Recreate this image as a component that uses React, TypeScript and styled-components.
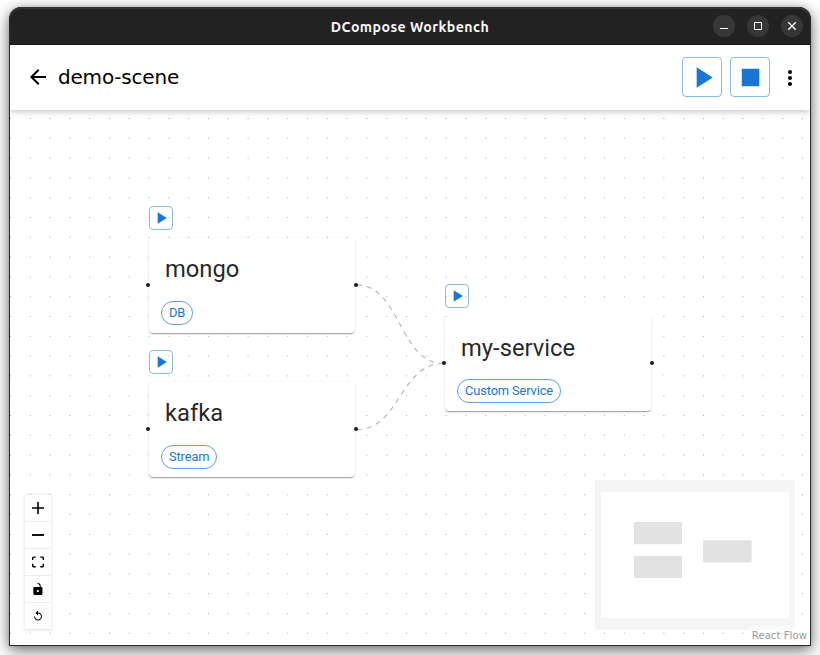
import React from "react";
import styled, { createGlobalStyle } from "styled-components";

const GlobalStyle = createGlobalStyle`
  html, body { margin: 0; height: 100%; overflow: hidden; background: #fff; }
  *, *::before, *::after { box-sizing: border-box; }
  button { font: inherit; color: inherit; padding: 0; margin: 0; }
  svg { display: block; flex: none; }
`;

const blue = "#1976d2";

const Desktop = styled.div`
  width: 820px;
  height: 655px;
  padding: 7px 9px 9px 9px;
  overflow: hidden;
  font-family: Roboto, sans-serif;
`;

const Window = styled.main`
  width: 802px;
  height: 639px;
  display: flex;
  flex-direction: column;
  border: 1px solid #2b2b2b;
  border-top: 0;
  border-radius: 12px 12px 0 0;
  background: #222;
  box-shadow: 0 4px 15px rgba(0, 0, 0, 0.6), 0 0 3px rgba(0, 0, 0, 0.15);
`;

const TitleBar = styled.header`
  height: 38px;
  flex: none;
  display: grid;
  grid-template-columns: 1fr auto 1fr;
  align-items: center;
  border-radius: 12px 12px 0 0;
  border-bottom: 1px solid #161616;
  background: #222;
  box-shadow: inset 0 2px 0 #343434;
`;

const WindowTitle = styled.h1`
  grid-column: 2;
  margin: 2px 0 0;
  font: 700 14.2px/20px Ubuntu, "Noto Sans", sans-serif;
  letter-spacing: 0.42px;
  color: #f7f7f7;
`;

const WindowButtons = styled.div`
  display: flex;
  justify-content: flex-end;
  gap: 12px;
  padding-right: 7px;
`;

const WindowButton = styled.button`
  width: 22px;
  height: 22px;
  display: grid;
  place-items: center;
  border: 0;
  border-radius: 50%;
  background: #373737;
`;

const AppBar = styled.div`
  z-index: 1;
  height: 65px;
  flex: none;
  display: flex;
  align-items: center;
  padding: 0 8px 1px 16px;
  background: #fff;
  box-shadow: 0 2px 4px -1px rgba(0, 0, 0, 0.12), 0 4px 5px rgba(0, 0, 0, 0.06),
    0 1px 10px rgba(0, 0, 0, 0.08);
  clip-path: inset(0 0 -20px 0);
`;

const IconButton = styled.button`
  width: 24px;
  height: 24px;
  border: 0;
  background: none;
`;

const MoreButton = styled(IconButton)`
  margin-top: 2px;
`;

const SceneName = styled.h2`
  flex: 1;
  margin: 0 0 1px 8px;
  font: 400 20px/28px "DejaVu Sans", sans-serif;
  letter-spacing: -0.2px;
  color: #000;
`;

const Actions = styled.div`
  display: flex;
  align-items: center;
  gap: 8px;
`;

const ActionButton = styled.button<{ $small?: boolean }>`
  width: ${(p) => (p.$small ? 24 : 40)}px;
  height: ${(p) => (p.$small ? 24 : 40)}px;
  display: grid;
  place-items: center;
  border: 1px solid rgba(25, 118, 210, 0.5);
  border-radius: 4px;
  background: none;
`;

const Canvas = styled.section`
  position: relative;
  flex: 1;
  overflow: hidden;
  background: #fff;
`;

const Backdrop = styled.svg`
  position: absolute;
  inset: 0;
`;

const Node = styled.div<{ $x: number; $y: number }>`
  position: absolute;
  left: ${(p) => p.$x}px;
  top: ${(p) => p.$y}px;
  width: 206px;
`;

const Card = styled.article`
  position: relative;
  height: 95px;
  margin-top: 8px;
  padding: 15.4px 12px 8px;
  display: flex;
  flex-direction: column;
  justify-content: space-between;
  align-items: flex-start;
  border-radius: 4px;
  background: #fff;
  box-shadow: 0 2px 1px -1px rgba(0, 0, 0, 0.2), 0 1px 1px rgba(0, 0, 0, 0.14),
    0 1px 3px rgba(0, 0, 0, 0.12);
`;

const NodeName = styled.h3`
  margin: 0 4px;
  font: 400 23.75px/32px Roboto, sans-serif;
  color: rgba(0, 0, 0, 0.87);
`;

const Chip = styled.span`
  height: 24px;
  padding: 0 7px;
  border: 1px solid rgba(25, 118, 210, 0.7);
  border-radius: 12px;
  font: 400 12.87px/22px Roboto, sans-serif;
  letter-spacing: -0.13px;
  color: ${blue};
`;

const Handle = styled.i<{ $side: "left" | "right" }>`
  position: absolute;
  top: 45px;
  ${(p) => p.$side}: -3px;
  width: 4px;
  height: 4px;
  border-radius: 50%;
  background: #1a192b;
`;

const Controls = styled.div`
  position: absolute;
  left: 15px;
  bottom: 15px;
  width: 26px;
  display: flex;
  flex-direction: column;
  box-shadow: 0 0 2px 1px rgba(0, 0, 0, 0.08);
`;

const ControlButton = styled.button`
  width: 26px;
  height: 27px;
  display: grid;
  place-items: center;
  border: 0;
  border-bottom: 1px solid #eee;
  background: #fefefe;
`;

const MiniMap = styled.svg`
  position: absolute;
  right: 15px;
  bottom: 15px;
  background: #fff;
`;

const Attribution = styled.span`
  position: absolute;
  right: 0;
  bottom: 0;
  padding: 3px 3px 2px;
  background: rgba(255, 255, 255, 0.5);
  font: 400 10px/14px "DejaVu Sans", sans-serif;
  letter-spacing: 0.1px;
  color: #999;
`;

const MaterialIcon = ({ d, size = 24, color = "#000" }: { d: string; size?: number; color?: string }) => (
  <svg width={size} height={size} viewBox="0 0 24 24" fill={color}>
    <path d={d} />
  </svg>
);

const PLAY = "M8 5v14l11-7z";
const STOP = "M6 6h12v12H6z";
const BACK = "M20 11H7.83l5.59-5.59L12 4l-8 8 8 8 1.41-1.41L7.83 13H20v-2z";
const MORE =
  "M12 8c1.1 0 2-.9 2-2s-.9-2-2-2-2 .9-2 2 .9 2 2 2zm0 2c-1.1 0-2 .9-2 2s.9 2 2 2 2-.9 2-2-.9-2-2-2zm0 6c-1.1 0-2 .9-2 2s.9 2 2 2 2-.9 2-2-.9-2-2-2z";

const nodes = [
  { name: "mongo", kind: "DB", x: 139, y: 95.6 },
  { name: "kafka", kind: "Stream", x: 139, y: 240 },
  { name: "my-service", kind: "Custom Service", x: 435, y: 174.4 },
];

const edges = [
  "M347 175C390 175 390 253.5 433 253.5",
  "M347 319.5C390 319.5 390 253.5 433 253.5",
];

const controlIcons = [
  <svg key="in" width="12" height="12" viewBox="0 0 32 32"><path d="M32 18.133H18.133V32h-4.266V18.133H0v-4.266h13.867V0h4.266v13.867H32z" /></svg>,
  <svg key="out" width="12" height="12" viewBox="0 0 32 32"><path d="M0 13.5h32v5H0z" /></svg>,
  <svg key="fit" width="12" height="12" viewBox="0 0 32 30"><path d="M3.692 4.63c0-.53.4-.938.939-.938h5.215V0H4.708C2.13 0 0 2.054 0 4.63v5.216h3.692V4.631zM27.354 0h-5.2v3.692h5.17c.53 0 .984.4.984.939v5.215H32V4.631A4.624 4.624 0 0027.354 0zm.954 24.83c0 .532-.4.94-.939.94h-5.215v3.768h5.215c2.577 0 4.631-2.13 4.631-4.707v-5.139h-3.692v5.139zm-23.677.94c-.531 0-.939-.4-.939-.94v-5.138H0v5.139c0 2.577 2.13 4.707 4.708 4.707h5.138V25.77H4.631z" /></svg>,
  <svg key="lock" width="12" height="12" viewBox="0 0 25 32"><path d="M21.333 10.667H19.81V7.619C19.81 3.429 16.38 0 12.19 0c-4.114 1.828-1.37 2.133.305 2.438 1.676.305 4.42 2.59 4.42 5.181v3.048H3.047A3.056 3.056 0 000 13.714v15.238A3.056 3.056 0 003.048 32h18.285a3.056 3.056 0 003.048-3.048V13.714a3.056 3.056 0 00-3.048-3.047zM12.19 24.533a3.056 3.056 0 01-3.047-3.047 3.056 3.056 0 013.047-3.048 3.056 3.056 0 013.048 3.048 3.056 3.056 0 01-3.048 3.047z" /></svg>,
  <MaterialIcon key="reset" size={12} d="M12 5V1L7 6l5 5V7c3.31 0 6 2.69 6 6s-2.69 6-6 6-6-2.69-6-6H4c0 4.42 3.58 8 8 8s8-3.58 8-8-3.58-8-8-8z" />,
];

export default function App() {
  return (
    <Desktop>
      <GlobalStyle />
      <Window>
        <TitleBar>
          <WindowTitle>DCompose Workbench</WindowTitle>
          <WindowButtons>
            <WindowButton aria-label="Minimize">
              <svg width="22" height="22"><path d="M7 13.5h8" stroke="#fff" /></svg>
            </WindowButton>
            <WindowButton aria-label="Maximize">
              <svg width="22" height="22"><path d="M7.5 7.5h7v7h-7z" fill="none" stroke="#fff" /></svg>
            </WindowButton>
            <WindowButton aria-label="Close">
              <svg width="22" height="22"><path d="M7.2 7.2l7.6 7.6M14.8 7.2l-7.6 7.6" stroke="#fff" strokeWidth="1.3" /></svg>
            </WindowButton>
          </WindowButtons>
        </TitleBar>
        <AppBar>
          <IconButton aria-label="Back"><MaterialIcon d={BACK} /></IconButton>
          <SceneName>demo-scene</SceneName>
          <Actions>
            <ActionButton aria-label="Run all"><MaterialIcon d={PLAY} size={35} color={blue} /></ActionButton>
            <ActionButton aria-label="Stop all"><MaterialIcon d={STOP} size={35} color={blue} /></ActionButton>
            <MoreButton aria-label="More"><MaterialIcon d={MORE} /></MoreButton>
          </Actions>
        </AppBar>
        <Canvas>
          <Backdrop width="800" height="535">
            <defs>
              <pattern id="dots" x="0" y="8" width="19.8" height="19.8" patternUnits="userSpaceOnUse">
                <circle cx="0.5" cy="0.5" r="0.5" fill="#8c8c94" />
              </pattern>
            </defs>
            <rect width="800" height="535" fill="url(#dots)" />
            {edges.map((d) => (
              <path key={d} d={d} fill="none" stroke="#b1b1b7" strokeWidth="1.1" strokeDasharray="4.95" />
            ))}
          </Backdrop>
          {nodes.map((n) => (
            <Node key={n.name} $x={n.x} $y={n.y}>
              <ActionButton $small aria-label={`Run ${n.name}`}>
                <MaterialIcon d={PLAY} size={20} color={blue} />
              </ActionButton>
              <Card>
                <NodeName>{n.name}</NodeName>
                <Chip>{n.kind}</Chip>
                <Handle $side="left" />
                <Handle $side="right" />
              </Card>
            </Node>
          ))}
          <Controls>
            {controlIcons.map((icon) => (
              <ControlButton key={icon.key}>{icon}</ControlButton>
            ))}
          </Controls>
          <MiniMap width="200" height="150">
            <g fill="#e2e2e2">
              <rect x="39" y="42" width="48" height="22.3" rx="1" />
              <rect x="39" y="76" width="48" height="22" rx="1" />
              <rect x="108" y="60.3" width="48.5" height="22.3" rx="1" />
            </g>
            <path d="M0 0h200v150H0zM6 12v126h188V12z" fill="#f5f5f5" fillRule="evenodd" />
          </MiniMap>
          <Attribution>React Flow</Attribution>
        </Canvas>
      </Window>
    </Desktop>
  );
}
